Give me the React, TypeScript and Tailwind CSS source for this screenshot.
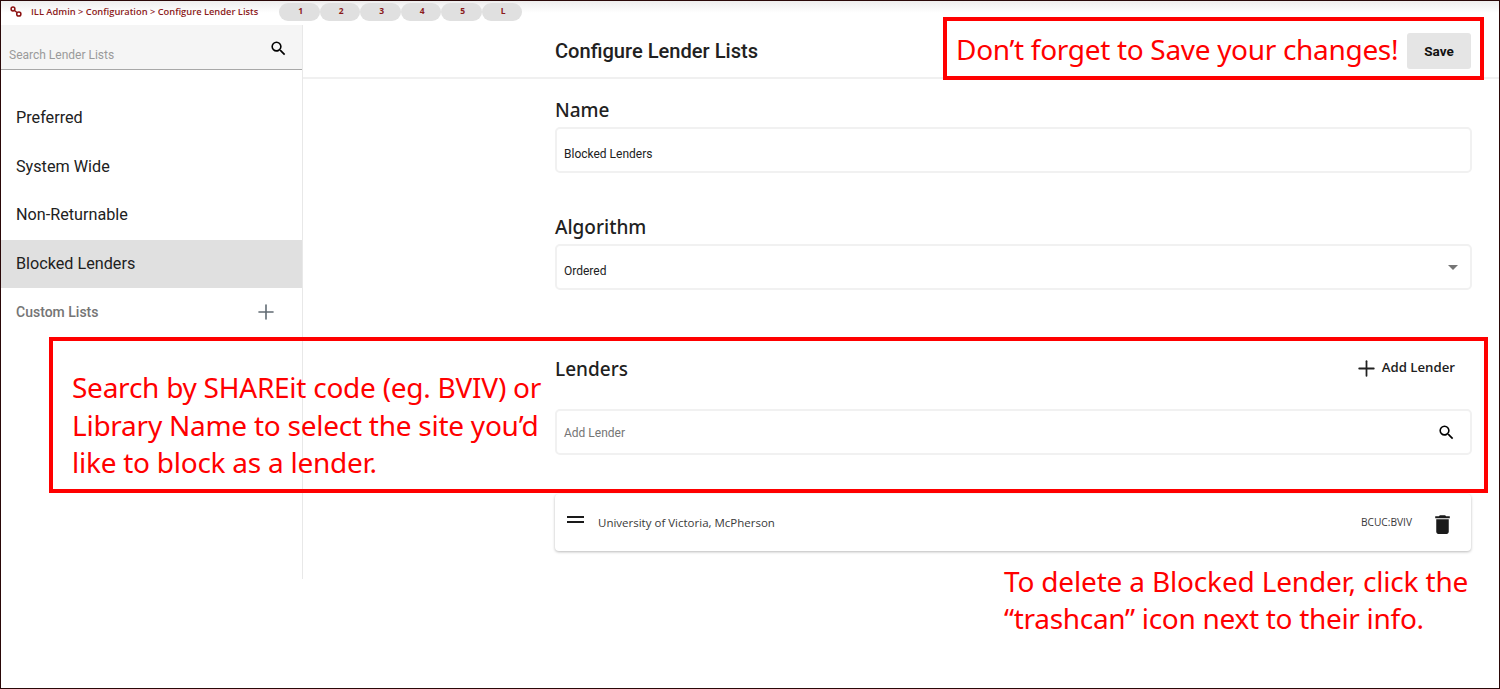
import { Plus } from "lucide-react";

const lists = ["Preferred", "System Wide", "Non-Returnable", "Blocked Lenders"];
const tabs = ["1", "2", "3", "4", "5", "L"];

function SearchIcon({ className }: { className: string }) {
  return (
    <svg className={className} viewBox="0 0 24 24" fill="currentColor">
      <path d="M15.5 14h-.79l-.28-.27A6.471 6.471 0 0 0 16 9.5 6.5 6.5 0 1 0 9.5 16c1.61 0 3.09-.59 4.23-1.57l.27.28v.79l5 4.99L20.49 19l-4.99-5zm-6 0C7.01 14 5 11.99 5 9.5S7.01 5 9.5 5 14 7.01 14 9.5 11.99 14 9.5 14z" />
    </svg>
  );
}

function TopBar() {
  return (
    <div className="h-[24px] flex items-center shrink-0 bg-gradient-to-b from-[#eeeeee] via-white to-white">
      <svg className="ml-[9px] w-[12px] h-[12px] -mt-[3px]" viewBox="0 0 12 12" fill="none" stroke="#8b1010" strokeWidth="1.5">
        <circle cx="3" cy="3" r="1.9" />
        <circle cx="8.8" cy="8" r="2.1" />
        <path d="M4.5 4.5 L7 6.5" />
      </svg>
      <div className="ml-[9px] text-[9.3px] font-semibold text-[#8b1a1a] font-['Open_Sans',sans-serif] whitespace-nowrap w-[248px] -mt-[2px]">
        ILL Admin &gt; Configuration &gt; Configure Lender Lists
      </div>
      <div className="flex -mt-[2px]">
        {tabs.map((t) => (
          <div
            key={t}
            className="w-[40.5px] h-[18px] rounded-full bg-[#e0e0e0] flex items-center justify-center text-[8.5px] font-bold text-[#8b1a1a] font-['Open_Sans',sans-serif] pb-[2px] pl-[3px]"
          >
            {t}
          </div>
        ))}
      </div>
    </div>
  );
}

function Sidebar() {
  return (
    <div className="w-[301px] h-[554px] shrink-0 border-r border-[#e8e8e8] box-content">
      <div className="h-[44px] bg-[#f5f5f5] border-b border-[#a8a8a8] flex justify-between pl-2 pr-[14px] box-content">
        <span className="mt-[23px] text-[12px] leading-[14px] text-[#9a9a9a]">Search Lender Lists</span>
        <SearchIcon className="w-[19px] h-[19px] mt-[14px] text-black" />
      </div>
      <div className="mt-[24px]">
        {lists.map((name) => (
          <div
            key={name}
            className={
              "h-[48.5px] flex items-center pl-[15px] text-[16.2px] text-[#212121] " +
              (name === "Blocked Lenders" ? "bg-[#e0e0e0]" : "")
            }
          >
            {name}
          </div>
        ))}
      </div>
      <div className="h-[48px] flex items-center justify-between pl-[15px] pr-[24px]">
        <span className="text-[14px] font-medium text-[#757575]">Custom Lists</span>
        <Plus className="w-[24px] h-[24px] text-[#616b73]" strokeWidth={1.6} />
      </div>
    </div>
  );
}

function Field({ children, className = "" }: { children: React.ReactNode; className?: string }) {
  return (
    <div className={"h-[46px] border-2 border-[#f1f1f1] rounded-[5px] flex items-center justify-between pl-[7px] text-[12px] text-[#212121] " + className}>
      {children}
    </div>
  );
}

function Main() {
  return (
    <div className="flex-1 min-w-0">
      <div className="h-[52px] border-b-2 border-[#f0f0f0] box-content pl-[252px] pr-[28px] flex items-center justify-between">
        <h1 className="text-[20.1px] font-medium text-[#212121]">Configure Lender Lists</h1>
        <button className="w-[64px] h-[36px] pt-[1px] bg-[#e5e5e5] rounded-[3px] text-[13.5px] font-bold text-[#111] mt-[-1px]">Save</button>
      </div>
      <div className="pl-[252px] pr-[27px]">
        <h2 className="mt-[19px] text-[19px] leading-[24px] font-medium text-[#212121] font-['Noto_Sans',sans-serif]">Name</h2>
        <div className="mt-[5px]">
          <Field className="pt-[8px]">Blocked Lenders</Field>
        </div>
        <h2 className="mt-[42px] text-[19px] leading-[24px] font-medium text-[#212121] font-['Noto_Sans',sans-serif]">Algorithm</h2>
        <div className="mt-[5px]">
          <Field>
            <span className="pt-[8px]">Ordered</span>
            <span className="mr-[12px] w-0 h-0 border-x-[5px] border-x-transparent border-t-[5px] border-t-[#757575]" />
          </Field>
        </div>
        <div className="mt-[60px] flex justify-between items-center h-[36px]">
          <h2 className="pt-[2px] text-[19px] font-medium text-[#212121] font-['Noto_Sans',sans-serif]">Lenders</h2>
          <div className="flex items-center pr-[17px] text-[13.2px] font-semibold text-[#212121] font-['Open_Sans',sans-serif]">
            <Plus className="w-[25px] h-[25px] mr-[3px]" strokeWidth={1.7} />
            <span>Add Lender</span>
          </div>
        </div>
        <div className="mt-[23px]">
          <Field>
            <span className="pt-[2px] text-[#757575]">Add Lender</span>
            <SearchIcon className="w-[19px] h-[19px] mr-[14px] text-black" />
          </Field>
        </div>
        <div className="mt-[39px] mr-[1px] h-[57px] rounded-[4px] bg-white shadow-[0_1px_3px_rgba(0,0,0,0.28)] flex items-center pl-[12px] pr-[16px] text-[#3a3a3a] font-['Open_Sans',sans-serif]">
          <div className="w-[17px] h-[7px] border-y-2 border-[#1a1a1a] -mt-[6px]" />
          <span className="ml-[14px] text-[11.5px]">University of Victoria, McPherson</span>
          <span className="ml-auto text-[10.2px]">BCUC:BVIV</span>
          <svg className="ml-[18px] mt-[3px] w-[25px] h-[25px] text-[#1a1a1a]" viewBox="0 0 24 24" fill="currentColor">
            <path d="M6 19c0 1.1.9 2 2 2h8c1.1 0 2-.9 2-2V7H6v12zM19 4h-3.5l-1-1h-5l-1 1H5v2h14V4z" />
          </svg>
        </div>
      </div>
    </div>
  );
}

export default function App() {
  return (
    <div className="relative w-[1500px] h-[689px] overflow-hidden bg-white border border-[#2a0808] flex flex-col font-['Roboto',sans-serif]">
      <TopBar />
      <div className="flex flex-1 min-h-0">
        <Sidebar />
        <Main />
      </div>

      {/* red callouts pasted over the screenshot */}
      <div className="absolute left-[942px] top-[16px] w-[541px] h-[63px] border-[4px] border-[#ff0000] flex items-center pl-[9px] text-[28px] tracking-[-0.31px] text-[#ff0000] font-['Noto_Sans',sans-serif] whitespace-nowrap">
        Don’t forget to Save your changes!
      </div>
      <div className="absolute left-[48px] top-[336px] w-[1439px] h-[156px] border-[4px] border-[#ff0000] pl-[19px] pt-[28px] text-[28px] leading-[37.5px] tracking-[-0.25px] text-[#ff0000] font-['Noto_Sans',sans-serif]">
        Search by SHAREit code (eg. BVIV) or<br />
        Library Name to select the site you’d<br />
        like to block as a lender.
      </div>
      <div className="absolute left-[1003px] top-[562px] text-[28px] leading-[37px] tracking-[-0.17px] text-[#ff0000] font-['Noto_Sans',sans-serif] whitespace-nowrap">
        To delete a Blocked Lender, click the<br />
        <span className="tracking-[-0.3px]">“trashcan” icon next to their info.</span>
      </div>
    </div>
  );
}
